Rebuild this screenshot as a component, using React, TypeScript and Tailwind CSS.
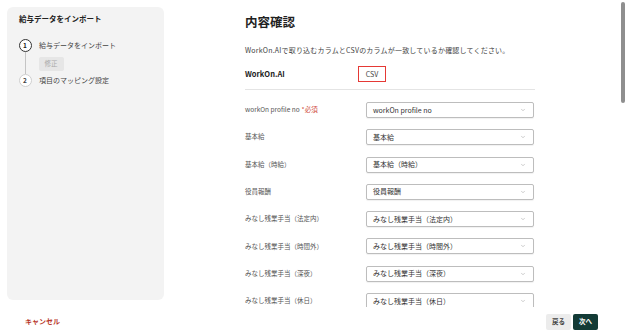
import { ChevronDown } from 'lucide-react'

const rows = [
  { label: 'workOn profile no', value: 'workOn profile no', required: true },
  { label: '基本給', value: '基本給' },
  { label: '基本給（時給）', value: '基本給（時給）' },
  { label: '役員報酬', value: '役員報酬' },
  { label: 'みなし残業手当（法定内）', value: 'みなし残業手当（法定内）' },
  { label: 'みなし残業手当（時間外）', value: 'みなし残業手当（時間外）' },
  { label: 'みなし残業手当（深夜）', value: 'みなし残業手当（深夜）' },
  { label: 'みなし残業手当（休日）', value: 'みなし残業手当（休日）' },
]

function Sidebar() {
  return (
    <div className="pl-[7px] pt-[7px]">
      <div className="w-[157px] h-[293px] rounded-[6px] bg-[#f3f3f3] pl-[12px] pt-[7px]">
        <div className="text-[7.5px] leading-[10px] font-bold text-[#222]">給与データをインポート</div>
        <div className="mt-[15px] -ml-[0.5px] flex flex-col">
          <div className="flex items-center gap-[7.5px]">
            <div className="w-[13px] h-[13px] rounded-full border-[1.5px] border-[#333] bg-white flex items-center justify-center text-[6.5px] font-bold text-[#222] leading-none">1</div>
            <span className="text-[7px] text-[#444]">給与データをインポート</span>
          </div>
          <div className="flex">
            <div className="w-[13px] flex justify-center">
              <div className="w-px h-full bg-[#c4c4c4]" />
            </div>
            <div className="ml-[7px] pt-[5px] pb-[3px]">
              <div className="w-[25px] h-[14px] rounded-[2px] bg-[#e6e6e6] text-[#aaa] text-[6.5px] flex items-center justify-center">修正</div>
            </div>
          </div>
          <div className="flex items-center gap-[7.5px]">
            <div className="w-[13px] h-[13px] rounded-full border border-[#cfcfcf] bg-white flex items-center justify-center text-[6.5px] font-bold text-[#444] leading-none">2</div>
            <span className="text-[7px] text-[#444]">項目のマッピング設定</span>
          </div>
        </div>
      </div>
    </div>
  )
}

function Select({ value }: { value: string }) {
  return (
    <div className="w-[168px] h-[16px] rounded-[2px] border border-[#bdbdbd] bg-white shadow-[0_1px_1px_rgba(0,0,0,0.06)] flex items-center justify-between pl-[6px] pr-[7px]">
      <span className="text-[7px] text-[#333] leading-none">{value}</span>
      <ChevronDown size={6} strokeWidth={2} className="text-[#9a9a9a]" />
    </div>
  )
}

export default function App() {
  return (
    <div className="relative w-[625px] h-[334px] overflow-hidden bg-white" style={{ fontFamily: '"Noto Sans CJK JP", "Noto Sans", sans-serif' }}>
      <div className="flex h-[307px]">
        <Sidebar />
        <div className="flex-1 overflow-hidden pl-[81px] pt-[14px]">
          <div className="w-[290px]">
            <h1 className="text-[12.5px] leading-[16px] font-bold text-[#222]">内容確認</h1>
            <p className="mt-[15px] text-[7px] leading-[10px] text-[#444] tracking-[0.2px]">WorkOn.AIで取り込むカラムとCSVのカラムが一致しているか確認してください。</p>
            <div className="mt-[11px] flex items-center h-[16px]">
              <div className="w-[113px] text-[7.5px] font-bold text-[#222]">WorkOn.AI</div>
              <div className="h-[16px] w-[28px] border-[1.5px] border-[#e53935] flex items-center justify-center text-[7px] text-[#444]">CSV</div>
            </div>
            <div className="mt-[7px] border-t border-[#e4e4e4]" />
            <div className="mt-[12px] flex flex-col gap-[11.3px]">
              {rows.map((r) => (
                <div key={r.label} className="flex items-center h-[16px]">
                  <div className="w-[121px] text-[6.5px] text-[#555]">
                    {r.label}
                    {r.required && <span className="ml-[2px] text-[#d04a3a]">*必須</span>}
                  </div>
                  <Select value={r.value} />
                </div>
              ))}
            </div>
          </div>
        </div>
      </div>
      <div className="h-[27px] pt-[2px] flex items-center justify-between pl-[25px] pr-[27px]">
        <button className="text-[7px] font-bold text-[#b8392d]">キャンセル</button>
        <div className="flex gap-[2px]">
          <button className="w-[25px] h-[16px] rounded-[2px] bg-[#ececec] text-[6.5px] font-bold text-[#444]">戻る</button>
          <button className="w-[25px] h-[16px] rounded-[2px] bg-[#133b36] text-[6.5px] font-bold text-white">次へ</button>
        </div>
      </div>
      <div className="absolute left-[621px] top-[2px] w-[3.5px] h-[101px] rounded-full bg-[#8f8f8f]" />
    </div>
  )
}
